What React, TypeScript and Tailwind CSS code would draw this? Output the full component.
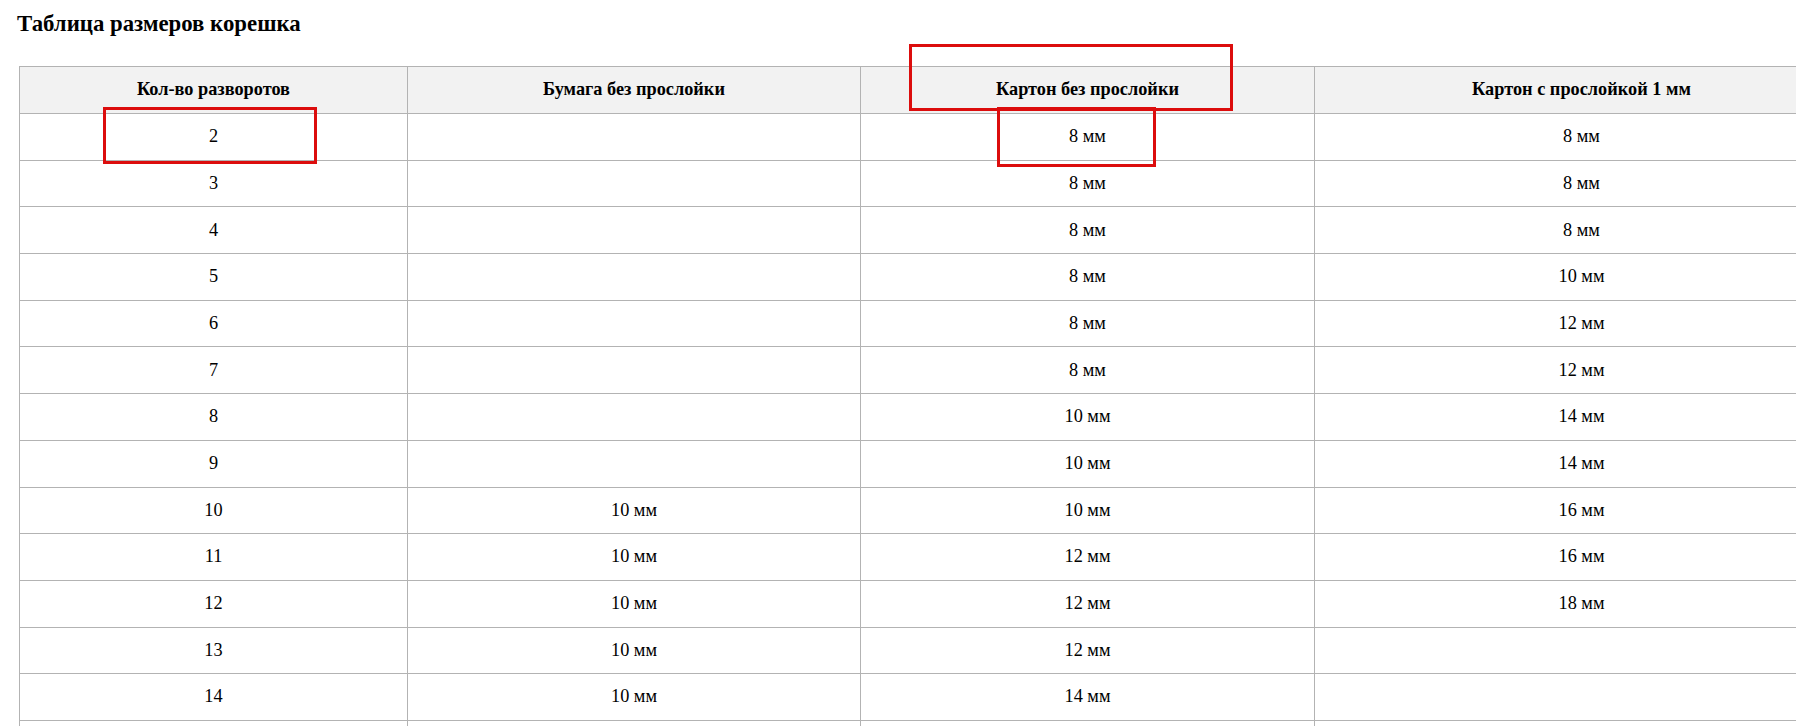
const rows: [string, string, string, string][] = [
  ["2", "", "8 мм", "8 мм"],
  ["3", "", "8 мм", "8 мм"],
  ["4", "", "8 мм", "8 мм"],
  ["5", "", "8 мм", "10 мм"],
  ["6", "", "8 мм", "12 мм"],
  ["7", "", "8 мм", "12 мм"],
  ["8", "", "10 мм", "14 мм"],
  ["9", "", "10 мм", "14 мм"],
  ["10", "10 мм", "10 мм", "16 мм"],
  ["11", "10 мм", "12 мм", "16 мм"],
  ["12", "10 мм", "12 мм", "18 мм"],
  ["13", "10 мм", "12 мм", ""],
  ["14", "10 мм", "14 мм", ""],
  ["", "", "", ""],
];

const headers = [
  "Кол-во разворотов",
  "Бумага без прослойки",
  "Картон без прослойки",
  "Картон с прослойкой 1 мм",
];

const App = () => {
  return (
    <div
      className="relative h-[726px] w-full overflow-hidden bg-white text-black"
      style={{ fontFamily: '"Liberation Serif", "Times New Roman", serif' }}
    >
      <div className="pl-[17px] pt-[12px] text-[22.8px] font-bold leading-[24px]">
        Таблица размеров корешка
      </div>

      <table className="ml-[19px] mt-[30px] w-[1829px] table-fixed border-collapse text-[18.3px]">
        <colgroup>
          <col className="w-[388px]" />
          <col className="w-[453px]" />
          <col className="w-[454px]" />
          <col className="w-[534px]" />
        </colgroup>
        <thead>
          <tr className="h-[47px] bg-[#f2f2f2]">
            {headers.map((h) => (
              <th key={h} className="border border-[#b3b3b3] p-0 text-center font-bold">
                {h}
              </th>
            ))}
          </tr>
        </thead>
        <tbody>
          {rows.map((r, idx) => (
            <tr key={idx} className="h-[46.7px]">
              {r.map((cell, i) => (
                <td key={i} className="border border-[#b3b3b3] p-0 text-center">
                  {cell}
                </td>
              ))}
            </tr>
          ))}
        </tbody>
      </table>

      {/* annotation boxes */}
      <div className="absolute left-[103px] top-[107px] h-[57px] w-[214px] border-[3px] border-[#dc0d0d]" />
      <div className="absolute left-[909px] top-[44px] h-[67px] w-[324px] border-[3px] border-[#dc0d0d]" />
      <div className="absolute left-[997px] top-[107px] h-[60px] w-[159px] border-[3px] border-[#dc0d0d]" />
    </div>
  );
};

export default App;
